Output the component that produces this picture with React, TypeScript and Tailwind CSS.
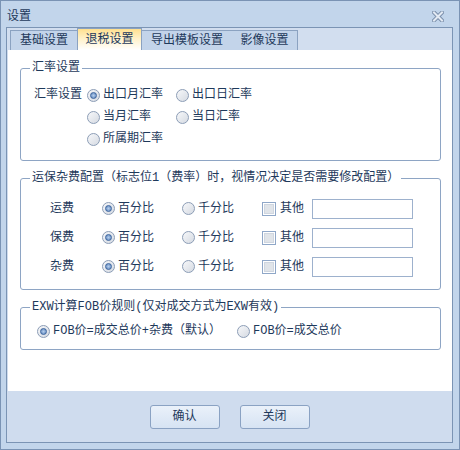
import React from "react"

const ink = "text-[#1e395b]"

const Radio = ({ checked }: { checked?: boolean }) => (
  <span className="flex h-[13px] w-[13px] shrink-0 items-center justify-center rounded-full border border-[#8c9db6] bg-[linear-gradient(135deg,#f7f8fa,#d5dae2)]">
    {checked && (
      <span className="h-[7px] w-[7px] rounded-full border border-[#3d659e] bg-[radial-gradient(circle,#b4cdec,#5a83bb)]" />
    )}
  </span>
)

const RadioItem = ({ label, checked, className }: { label: string; checked?: boolean; className?: string }) => (
  <div className={`flex items-center gap-[3px] ${className ?? ""}`}>
    <Radio checked={checked} />
    <span className="whitespace-nowrap">{label}</span>
  </div>
)

const CheckItem = ({ label }: { label: string }) => (
  <div className="flex w-[50px] items-center gap-[4px]">
    <span className="flex h-[14px] w-[14px] shrink-0 items-center justify-center border border-[#8fa7c8] bg-white">
      <span className="h-[10px] w-[10px] border border-[#cfd6e0] bg-[#e0e4e9]" />
    </span>
    <span>{label}</span>
  </div>
)

// group box: padding goes on the inner div so the legend stays at the left edge
const Group = ({ title, className, inner, children }: { title: string; className?: string; inner: string; children: React.ReactNode }) => (
  <fieldset className={`rounded-[3px] border border-[#8ea5c4] ${className ?? ""}`}>
    <legend className="ml-[9px] px-[2px] leading-[14px]">{title}</legend>
    <div className={inner}>{children}</div>
  </fieldset>
)

const tabs = ["基础设置", "退税设置", "导出模板设置", "影像设置"]
const tabWidths = ["w-[67px]", "w-[65px]", "w-[90px]", "w-[66px]"]

const feeRows = ["运费", "保费", "杂费"]

export default function App() {
  return (
    <div
      className={`flex h-[450px] w-[460px] flex-col border border-[#7a93b4] bg-[#c2d5eb] font-['Liberation_Mono','Noto_Sans_CJK_SC',monospace] text-[12px] ${ink}`}
    >
      {/* title bar */}
      <div className="flex h-[26px] items-center justify-between pl-[6px] pr-[15px] pt-[5px]">
        <span className="leading-[14px]">设置</span>
        <svg width="12" height="11" viewBox="0 0 12 11">
          <path d="M2 1.5 L10 9.5 M10 1.5 L2 9.5" stroke="#7b8fab" strokeWidth="4" strokeLinecap="square" />
          <path d="M2 1.5 L10 9.5 M10 1.5 L2 9.5" stroke="#e3eaf3" strokeWidth="2" strokeLinecap="square" />
        </svg>
      </div>

      {/* panel */}
      <div className="mb-[6px] ml-[5px] mr-[6px] flex flex-1 flex-col border border-[#7b94b4] bg-[#cfdcee]">
        {/* tab strip */}
        <div className="flex h-[22px] items-end bg-[#d2deef] pl-[3px]">
          {tabs.map((t, i) =>
            i === 1 ? (
              <div
                key={t}
                className={`flex h-[22px] ${tabWidths[i]} items-center justify-center border-x border-t border-[#8ba2c1] bg-[linear-gradient(to_bottom,#ffe08f,#fff1c8_45%,#ffffff)] leading-[14px]`}
              >
                {t}
              </div>
            ) : (
              <div
                key={t}
                className={`flex h-[20px] ${tabWidths[i]} items-center justify-center border-t border-[#8ba2c1] bg-[#c3d4ea] leading-[14px] ${
                  i === 0 ? "border-l" : ""
                } ${i === 3 ? "border-r" : ""}`}
              >
                {t}
              </div>
            ),
          )}
        </div>

        {/* page */}
        <div className="ml-[1px] flex h-[341px] flex-col bg-white pl-[12px] pr-[11px] pt-[11px]">
          <Group title="汇率设置" inner="pb-[10px] pl-[13px] pt-[9px]">
            <div className="grid grid-cols-[53px_89px_auto] leading-[14px]">
              <div className="flex h-[22px] items-center">汇率设置</div>
              <div className="flex h-[22px] items-center">
                <RadioItem label="出口月汇率" checked />
              </div>
              <div className="flex h-[22px] items-center">
                <RadioItem label="出口日汇率" />
              </div>
              <div />
              <div className="flex h-[22px] items-center">
                <RadioItem label="当月汇率" />
              </div>
              <div className="flex h-[22px] items-center">
                <RadioItem label="当日汇率" />
              </div>
              <div />
              <div className="flex h-[22px] items-center">
                <RadioItem label="所属期汇率" />
              </div>
            </div>
          </Group>

          <Group
            title="运保杂费配置（标志位1（费率）时，视情况决定是否需要修改配置）"
            className="mt-[10px]"
            inner="pb-[8px] pl-[29px] pt-[9px]"
          >
            {feeRows.map((r) => (
              <div key={r} className="flex h-[29px] items-center leading-[14px]">
                <span className="w-[52px]">{r}</span>
                <RadioItem label="百分比" checked className="w-[80px]" />
                <RadioItem label="千分比" className="w-[80px]" />
                <CheckItem label="其他" />
                <div className="h-[20px] w-[101px] border border-[#9db1cd] bg-white" />
              </div>
            ))}
          </Group>

          <Group title="EXW计算FOB价规则(仅对成交方式为EXW有效)" className="mt-[10px]" inner="pb-[7px] pl-[16px] pt-[6px]">
            <div className="flex h-[22px] items-center leading-[14px]">
              <RadioItem label="FOB价=成交总价+杂费（默认）" checked className="w-[200px]" />
              <RadioItem label="FOB价=成交总价" />
            </div>
          </Group>
        </div>

        {/* buttons */}
        <div className="flex flex-1 justify-center gap-[20px] pt-[14px]">
          {["确认", "关闭"].map((b) => (
            <button
              key={b}
              className="h-[24px] w-[70px] rounded-[3px] border border-[#8aa2c3] bg-[linear-gradient(to_bottom,#eaf1fa,#d6e3f3)] leading-[14px]"
            >
              {b}
            </button>
          ))}
        </div>
      </div>
    </div>
  )
}
